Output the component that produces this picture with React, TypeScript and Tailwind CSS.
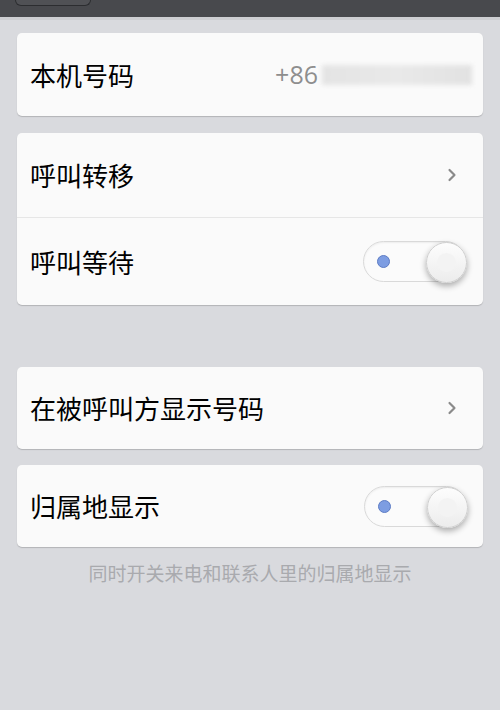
import { ChevronRight } from 'lucide-react';

const cjk = { fontFamily: '"Noto Sans CJK SC", "Noto Sans", sans-serif' };

function Toggle() {
  return (
    <div className="relative h-[41px] w-[103px]">
      <div className="h-full w-full rounded-full border border-[#d9d9d9] bg-[#fbfbfb] shadow-[inset_0_1px_2px_rgba(0,0,0,0.06)]" />
      <div className="absolute left-[14px] top-[14px] h-[13px] w-[13px] rounded-full border border-[#5d7cc4] bg-[#7d9de2]" />
      <div className="absolute right-[-1px] top-[1px] h-[41px] w-[41px] rounded-full border border-[#cfcfcf] bg-gradient-to-b from-[#fdfdfd] to-[#ececec] shadow-[0_3px_6px_rgba(0,0,0,0.32)]">
        <div className="m-[10px] h-[19px] w-[19px] rounded-full bg-[#f3f3f3]" />
      </div>
    </div>
  );
}

function Row({ label, height, children, divider }: { label: string; height: string; children?: React.ReactNode; divider?: boolean }) {
  return (
    <div className={`flex items-center justify-between pl-[13px] pr-[18px] ${height} ${divider ? 'border-b border-[#e6e6e6]' : ''}`}>
      <span className="text-[26px] leading-none text-black" style={cjk}>{label}</span>
      {children}
    </div>
  );
}

function Card({ children, className = '' }: { children: React.ReactNode; className?: string }) {
  return (
    <div className={`mx-[17px] overflow-hidden rounded-[5px] bg-[#fafafa] shadow-[0_1px_1px_rgba(0,0,0,0.18)] ${className}`}>
      {children}
    </div>
  );
}

function Chevron() {
  return <ChevronRight size={20} strokeWidth={2.6} className="mr-[3px] text-[#8a8a8a]" />;
}

export default function App() {
  return (
    <div className="min-h-[710px] w-[500px] bg-[#d9dade]" style={cjk}>
      <div className="h-[17px] bg-[#48494d] pl-[15px]">
        <div className="h-[6px] w-[76px] rounded-b-[6px] border border-t-0 border-[#2c2d30] bg-[#505155]" />
      </div>
      <div className="h-[3px] bg-[#cdced2]" />

      <Card className="mt-[13px]">
        <Row label="本机号码" height="h-[83px]">
          <div className="flex items-center">
            <span className="text-[25px] text-[#8e8e8e]" style={{ fontFamily: '"Open Sans", sans-serif' }}>+86</span>
            <div className="ml-[4px] mr-[-7px] h-[20px] w-[150px] bg-gradient-to-r from-[#e4e4e4] via-[#e9e9e9] to-[#e2e2e2] blur-[2px]" />
          </div>
        </Row>
      </Card>

      <Card className="mt-[17px]">
        <Row label="呼叫转移" height="h-[85px]" divider>
          <Chevron />
        </Row>
        <Row label="呼叫等待" height="h-[87px]">
          <div className="mr-[-1px]"><Toggle /></div>
        </Row>
      </Card>

      <Card className="mt-[62px]">
        <Row label="在被呼叫方显示号码" height="h-[82px]">
          <Chevron />
        </Row>
      </Card>

      <Card className="mt-[16px]">
        <Row label="归属地显示" height="h-[82px]">
          <div className="mr-[-2px]"><Toggle /></div>
        </Row>
      </Card>

      <p className="mt-[16px] text-center text-[19px] leading-none text-[#a9aaae]">同时开关来电和联系人里的归属地显示</p>
    </div>
  );
}
